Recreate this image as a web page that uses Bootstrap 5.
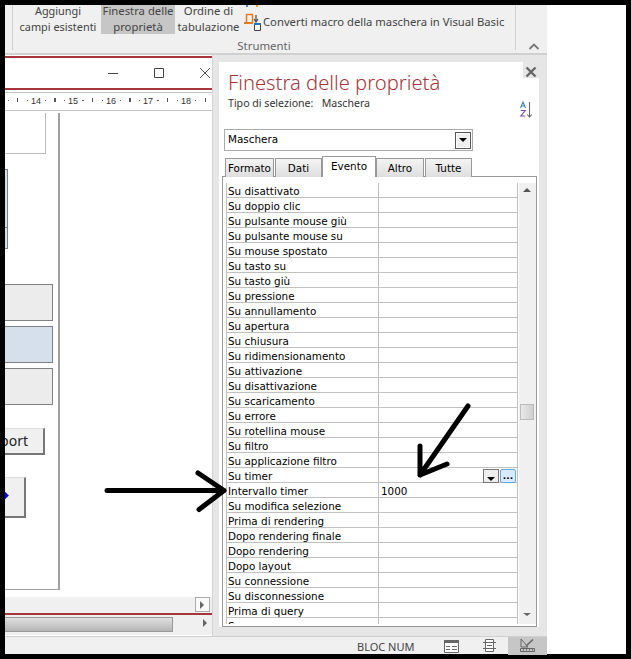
<!DOCTYPE html>
<html lang="it">

<head>
    <meta charset="UTF-8" />
    <meta name="viewport" content="width=device-width, initial-scale=1" />
    <title>Finestra delle proprietà</title>
    <link href="https://cdn.jsdelivr.net/npm/bootstrap@5.3.0/dist/css/bootstrap.min.css" rel="stylesheet">
    <style>
        body { margin: 0; background: #fff; font-family: "Noto Sans", sans-serif; font-size: 12px; color: #444; }
        .app-frame { position: relative; width: 631px; height: 659px; border: 5px solid #000; background: #fff; }
        .app-col { width: 542px; height: 649px; }

        /* ribbon */
        .rb-bar { height: 50px; flex: none; background: #f0f0f0; border-bottom: 2px solid #d0d0d0; padding-left: 7px; }
        .rb-group { width: 504px; height: 45px; border-left: 1px solid #d0d0d0; border-right: 1px solid #d0d0d0; position: relative; }
        .rb-btn { height: 29px; text-align: center; color: #444; font-size: 11.3px; white-space: nowrap; flex: none; }
        .rb-btn span { display: block; line-height: 12px; }
        .rb-btn span + span { line-height: 16px; margin-top: 2px; }
        .rb-btn-a { width: 78px; margin-left: 6px; margin-right: -1px; font-size: 10.9px; }
        .rb-btn-b { width: 74px; margin-left: 5px; background: #c6c6c6; }
        .rb-btn-c { width: 63px; margin-left: 2px; }
        .rb-cmd { margin-left: 3px; height: 29px; font-size: 11.27px; color: #444; white-space: nowrap; }
        .rb-group-name { position: absolute; left: 0; right: 0; top: 33px; text-align: center; color: #666; font-size: 11.4px; line-height: 16px; }
        .rb-up { position: absolute; left: 523px; top: 38px; }

        /* main */
        .main-row { height: 581px; flex: none; background: #e6e6e6; }
        .doc-win { width: 208px; flex: none; background: #fff; border-right: 1px solid #d4d4d4; }
        .doc-head { height: 34px; flex: none; border-top: 2px solid #a5373a; border-bottom: 2px solid #a5373a; margin-top: 1px; color: #555; justify-content: flex-end; }
        .win-btn { position: absolute; top: 9px; }
        .doc-rule { height: 19px; flex: none; margin-top: 2px; border-top: 1px solid #c4c4c4; border-bottom: 1px solid #c4c4c4; position: relative; overflow: hidden; font: 9px "Liberation Sans", sans-serif; color: #333; }
        .doc-rule span { position: absolute; top: 2px; line-height: 13px; }
        .doc-rule i { position: absolute; top: 7px; width: 1px; height: 1px; background: #555; }
        .doc-rule i.rule-bar { top: 5px; height: 4px; }
        .doc-canvas { position: relative; height: 486px; flex: none; overflow: hidden; background: #fff; }
        .cv-item { position: absolute; }
        .cv-line { left: 53px; top: 2px; width: 2px; height: 477px; background: #a0a0a0; }
        .cv-line-h { left: 0; top: 478px; width: 54px; height: 1px; background: #a0a0a0; }
        .cv-box { left: -2px; top: 2px; width: 43px; height: 41px; border: 1px solid #bbb; border-width: 0 1px 1px 0; }
        .cv-side { left: -2px; width: 5px; background: #d6e0ec; border: 1px solid #808080; }
        .cv-card { left: -2px; width: 50px; height: 37px; background: #ececec; border: 1px solid #808080; }
        .cv-card-on { background: #d6e0ec; }
        .cv-cmd { left: -2px; background: #f0f0f0; border: 1px solid #ddd; border-right: 2px solid #777; border-bottom: 2px solid #777; color: #222; }
        .cv-report { width: 42px; height: 27px; top: 317px; font-size: 14px; line-height: 24px; padding-right: 15px; white-space: nowrap; }
        .cv-next { width: 23px; height: 41px; top: 366px; }
        .cv-next i { position: absolute; left: -6px; top: 13px; width: 9px; height: 9px; background: #00f; transform: rotate(45deg); }
        .doc-hscroll { height: 16px; flex: none; background: #f0f0f0; position: relative; }
        .doc-hscroll-btn { position: absolute; left: 190px; top: 0; width: 15px; height: 15px; border: 1px solid #aaa; background: #fafafa; }
        .doc-foot { height: 22px; flex: none; background: #f0f0f0; border-top: 2px solid #a5373a; position: relative; }
        .doc-thumb { position: absolute; left: 0; top: 2px; width: 168px; height: 15px; border: 1px solid #999; border-left: 0; background: linear-gradient(#e0e0e0, #b4b4b4); }
        .tri-r { position: absolute; width: 0; height: 0; border-left: 4px solid #666; border-top: 4px solid transparent; border-bottom: 4px solid transparent; }

        /* property sheet */
        .ps-wrap { flex: 1; padding: 7px 8px 8px 6px; }
        .ps-sheet { position: relative; height: 565px; width: 320px; background: #fff; padding-top: 5px; }
        .ps-close { position: absolute; right: 0; top: 0; width: 16px; height: 16px; background: #e6e6e6; }
        .ps-title { height: 29px; padding-left: 9px; font-size: 20.2px; font-weight: 300; line-height: 30px; color: #a4373a; white-space: nowrap; }
        .ps-type { height: 14px; padding-left: 9px; font-size: 10.6px; line-height: 14px; color: #333; white-space: pre; }
        .ps-az { position: absolute; left: 301px; top: 39px; }
        .ps-combo { width: 249px; height: 22px; margin: 19px 0 4px 5px; border: 1px solid #aaa; padding: 0 1px 0 3px; font: 10.4px "DejaVu Sans", sans-serif; color: #000; background: #fff; }
        .ps-combo > span:first-child { margin-bottom: 2px; }
        .ps-drop { width: 16px; height: 17px; background: #eee; border: 1px solid #555; box-shadow: inset 0 0 0 1px #fff; display: flex; align-items: center; justify-content: center; }
        .tri-d { width: 0; height: 0; border-top: 4px solid #000; border-left: 4px solid transparent; border-right: 4px solid transparent; }
        .ps-tabs.nav { margin-left: 6px; height: 22px; flex-wrap: nowrap; align-items: flex-end; position: relative; z-index: 1; }
        .ps-tab { height: 19px; border: 1px solid #999; border-bottom: 0; background: linear-gradient(#f4f4f4, #dedede); font: 10.4px/19px "DejaVu Sans", sans-serif; color: #000; text-align: center; }
        .ps-tab-on { height: 21px; background: #fff; line-height: 18px; }
        .ps-frame { margin: -1px 0 0 3px; width: 315px; height: 451px; border: 1px solid #999; padding: 6px 0 2px 3px; background: #fff; }
        .ps-gridbox { flex: none; width: 292px; height: 441px; overflow: hidden; position: relative; }
        .ps-grid.table { width: 292px; table-layout: fixed; margin: 0; border-collapse: separate; border-spacing: 0; }
        .ps-grid.table > tbody > tr > td { height: 15px; padding: 2px 0 0 1px; border: 0; border-bottom: 1px solid #c0c0c0; font: 10.4px/12px "DejaVu Sans", sans-serif; color: #000; white-space: nowrap; overflow: hidden; background: #fff; box-shadow: none; }
        .ps-grid.table > tbody > tr > td:first-child { border-left: 1px solid #c0c0c0; border-right: 1px solid #c0c0c0; width: 153px; }
        .ps-grid.table > tbody > tr > td:last-child { border-right: 1px solid #c0c0c0; padding-left: 2px; }
        .ps-rowbtns { position: absolute; left: 257px; top: 286px; gap: 1px; }
        .ps-rowbtn { width: 16px; height: 14px; border: 1px solid #777; background: #eee; display: flex; align-items: flex-end; justify-content: center; padding-bottom: 1px; }
        .ps-rowbtn-on { border-color: #6aa7dc; background: #d6ebfb; border-radius: 2px; align-items: center; padding: 0; font: bold 9px/8px "DejaVu Sans", sans-serif; color: #000; }
        .ps-vscroll { width: 17px; flex: none; height: 441px; background: #f0f0f0; position: relative; margin-left: 1px; }
        .ps-thumb { position: absolute; left: 1px; top: 221px; width: 14px; height: 16px; background: linear-gradient(90deg, #e8e8e8, #d0d0d0); border: 1px solid #bbb; }
        .tri-u { position: absolute; left: 4px; top: 5px; width: 0; height: 0; border-bottom: 4px solid #555; border-left: 4px solid transparent; border-right: 4px solid transparent; }
        .tri-b { position: absolute; left: 4px; top: 430px; width: 0; height: 0; border-top: 3px solid #666; border-left: 4px solid transparent; border-right: 4px solid transparent; }

        /* status bar */
        .st-bar { height: 18px; flex: none; background: #f0f0f0; border-top: 1px solid #d0d0d0; position: relative; }
        .st-text { position: absolute; left: 352px; top: 1px; line-height: 17px; font-size: 11px; color: #444; }
        .st-ico { position: absolute; top: 1px; }
        .st-on { position: absolute; left: 503px; top: 0; width: 39px; height: 18px; background: #c6c6c6; }

        .note-arrows { position: absolute; left: -5px; top: -5px; width: 631px; height: 659px; pointer-events: none; }
    </style>
</head>

<body>
    <div class="app-frame">
        <div class="app-col d-flex flex-column">

            <!-- ribbon -->
            <div class="rb-bar position-relative">
                <div class="rb-group d-flex">
                    <div class="rb-btn rb-btn-a"><span>Aggiungi</span><span>campi esistenti</span></div>
                    <div class="rb-btn rb-btn-b"><span>Finestra delle</span><span>proprietà</span></div>
                    <div class="rb-btn rb-btn-c"><span>Ordine di</span><span>tabulazione</span></div>
                    <div class="rb-cmd d-flex align-items-start">
                        <svg width="20" height="29" viewBox="0 0 20 29">
                            <path d="M3 0h2v2H3z" fill="#4a86c8" />
                            <path d="M13 0h2v2h-2z" fill="#e8a040" />
                            <path d="M3.5 18V9.5h6V18" fill="none" stroke="#e07b22" stroke-width="1.5" />
                            <path d="M1 17h9v2H1z" fill="#e07b22" />
                            <path d="M13 10v6M11 14l2 3 2-3" fill="none" stroke="#555" stroke-width="1.3" />
                            <path d="M11.5 18.5h6v7h-6z" fill="#fff" stroke="#444" />
                            <path d="M11 18h7v2h-7z" fill="#2f72b8" />
                        </svg>
                        <span style="line-height:34px">Converti macro della maschera in Visual Basic</span>
                    </div>
                    <div class="rb-group-name">Strumenti</div>
                </div>
                <svg class="rb-up" width="12" height="8" viewBox="0 0 12 8"><path d="M1.5 6 6 1.5 10.5 6" fill="none" stroke="#777" stroke-width="1.8" /></svg>
            </div>

            <div class="main-row d-flex">

                <!-- form in design view -->
                <div class="doc-win d-flex flex-column">
                    <div class="doc-head position-relative">
                        <svg class="win-btn" style="left:103px" width="12" height="12" viewBox="0 0 12 12"><path d="M0 6.5h10" stroke="#444" /></svg>
                        <svg class="win-btn" style="left:148px" width="12" height="12" viewBox="0 0 12 12"><path d="M1.5 1.5h9v9h-9z" fill="none" stroke="#444" /></svg>
                        <svg class="win-btn" style="left:194px" width="12" height="12" viewBox="0 0 12 12"><path d="M1 1l10 10M11 1 1 11" stroke="#555" /></svg>
                    </div>
                    <div class="doc-rule" id="ruler"></div>
                    <div class="doc-canvas">
                        <div class="cv-item cv-box"></div>
                        <div class="cv-item cv-line"></div>
                        <div class="cv-item cv-line-h"></div>
                        <div class="cv-item cv-side" style="top:58px;height:59px"></div>
                        <div class="cv-item cv-side" style="top:116px;height:22px"></div>
                        <div class="cv-item cv-card" style="top:173px"></div>
                        <div class="cv-item cv-card cv-card-on" style="top:215px"></div>
                        <div class="cv-item cv-card" style="top:257px"></div>
                        <div class="cv-item cv-cmd cv-report d-flex justify-content-end">port</div>
                        <div class="cv-item cv-cmd cv-next"><i></i></div>
                    </div>
                    <div class="doc-hscroll">
                        <div class="doc-hscroll-btn"><span class="tri-r" style="left:4px;top:3px"></span></div>
                    </div>
                    <div class="doc-foot">
                        <div class="doc-thumb"></div>
                        <span class="tri-r" style="left:198px;top:4px"></span>
                    </div>
                </div>

                <!-- property sheet -->
                <div class="ps-wrap">
                    <div class="ps-sheet">
                        <div class="ps-close">
                            <svg width="16" height="16" viewBox="0 0 16 16"><path d="M3.5 3.5l9 9M12.5 3.5l-9 9" stroke="#666" stroke-width="2.4" /></svg>
                        </div>
                        <div class="ps-title">Finestra delle proprietà</div>
                        <div class="ps-type">Tipo di selezione:   Maschera</div>
                        <svg class="ps-az" width="17" height="20" viewBox="0 0 17 20">
                            <path d="M.5 7 3 1l2.5 6M1.3 5h3.4" fill="none" stroke="#3b7fc4" stroke-width="1.1" />
                            <path d="M.8 9.5h4.6L.8 15h4.6" fill="none" stroke="#7a4fa8" stroke-width="1.1" />
                            <path d="M9.5 1v15M7.2 13.5 9.5 16l2.3-2.5" fill="none" stroke="#666" stroke-width="1.1" />
                        </svg>
                        <div class="ps-combo d-flex align-items-center justify-content-between">
                            <span>Maschera</span>
                            <span class="ps-drop"><span class="tri-d"></span></span>
                        </div>
                        <div class="ps-tabs nav">
                            <div class="ps-tab" style="width:49px;margin-right:1px">Formato</div>
                            <div class="ps-tab" style="width:47px">Dati</div>
                            <div class="ps-tab ps-tab-on" style="width:54px">Evento</div>
                            <div class="ps-tab" style="width:48px;margin-right:1px">Altro</div>
                            <div class="ps-tab" style="width:47px">Tutte</div>
                        </div>
                        <div class="ps-frame d-flex">
                            <div class="ps-gridbox">
                                <table class="table ps-grid">
                                    <tbody id="gridRows"></tbody>
                                </table>
                                <div class="ps-rowbtns d-flex">
                                    <span class="ps-rowbtn"><span class="tri-d"></span></span>
                                    <span class="ps-rowbtn ps-rowbtn-on">...</span>
                                </div>
                            </div>
                            <div class="ps-vscroll">
                                <span class="tri-u"></span>
                                <div class="ps-thumb"></div>
                                <span class="tri-b"></span>
                            </div>
                        </div>
                    </div>
                </div>
            </div>

            <!-- status bar -->
            <div class="st-bar">
                <span class="st-text">BLOC NUM</span>
                <svg class="st-ico" style="left:439px" width="15" height="15" viewBox="0 0 15 15">
                    <path d="M.5 2.5h14v12H.5z" fill="#fff" stroke="#666" />
                    <path d="M0 2h15v3H0z" fill="#666" />
                    <path d="M2 8h4v1H2zM2 11h4v1H2zM8 8h5v1H8zM8 11h5v1H8z" fill="#666" />
                </svg>
                <svg class="st-ico" style="left:478px" width="13" height="15" viewBox="0 0 13 15">
                    <path d="M2.5 1.5h8v12h-8z" fill="#fff" stroke="#666" />
                    <path d="M0 4.5h13M0 10.5h13M4 7.5h5" stroke="#666" />
                </svg>
                <div class="st-on"></div>
                <svg class="st-ico" style="left:515px" width="15" height="15" viewBox="0 0 15 15">
                    <path d="M1 1v8l7 0z" fill="none" stroke="#666" />
                    <path d="M6 8 13 1.5" stroke="#666" stroke-width="1.6" />
                    <path d="M.5 10.5h14v3H.5z" fill="none" stroke="#666" />
                    <path d="M3.5 11v1.5M6.5 11v1.5M9.5 11v1.5M12.5 11v1.5" stroke="#666" />
                </svg>
            </div>
        </div>

        <!-- black arrows drawn on the screenshot -->
        <svg class="note-arrows" viewBox="0 0 631 659">
            <g fill="none" stroke="#000" stroke-width="5" stroke-linecap="round" stroke-linejoin="round">
                <path d="M107 490.5H224M198 473l26 17.5-25 19" />
                <path d="M468 406 420 475M420 446v29l27-11" />
            </g>
        </svg>
    </div>

    <script>
        let rows = ["Su disattivato", "Su doppio clic", "Su pulsante mouse giù", "Su pulsante mouse su",
            "Su mouse spostato", "Su tasto su", "Su tasto giù", "Su pressione", "Su annullamento", "Su apertura",
            "Su chiusura", "Su ridimensionamento", "Su attivazione", "Su disattivazione", "Su scaricamento",
            "Su errore", "Su rotellina mouse", "Su filtro", "Su applicazione filtro", "Su timer", "Intervallo timer",
            "Su modifica selezione", "Prima di rendering", "Dopo rendering finale", "Dopo rendering", "Dopo layout",
            "Su connessione", "Su disconnessione", "Prima di query", "Su"];
        let gridRows = document.getElementById("gridRows");
        rows.forEach(function (name) {
            let tr = document.createElement("tr");
            let a = document.createElement("td");
            let b = document.createElement("td");
            a.textContent = name;
            b.textContent = name === "Intervallo timer" ? "1000" : "";
            tr.append(a, b);
            gridRows.append(tr);
        });

        // ruler: numbers plus the dots and bars between them
        let ruler = document.getElementById("ruler");
        [[14, 31], [15, 68], [16, 106], [17, 143], [18, 181]].forEach(function (m) {
            let s = document.createElement("span");
            s.textContent = m[0];
            s.style.left = (m[1] - 5) + "px";
            ruler.append(s);
            [-28, -19, -9, 9, 19].forEach(function (d) {
                let t = document.createElement("i");
                if (Math.abs(d) === 19) t.className = "rule-bar";
                t.style.left = (m[1] + d) + "px";
                ruler.append(t);
            });
        });
    </script>
    <script src="https://cdn.jsdelivr.net/npm/bootstrap@5.3.0/dist/js/bootstrap.bundle.min.js"></script>
</body>

</html>
